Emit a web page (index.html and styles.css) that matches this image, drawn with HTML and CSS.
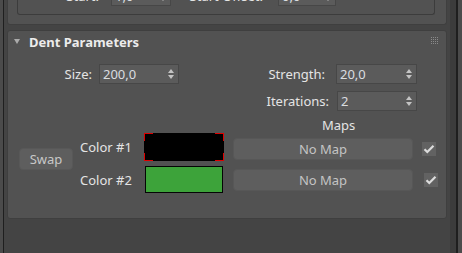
FILE: index.html
```html
<!DOCTYPE html>
<html>
<head>
<meta charset="utf-8">
<link rel="stylesheet" href="styles.css">
</head>
<body>
<div class="shell">
  <div class="edge-l"></div><div class="edge-line"></div><div class="gut-l"></div>
  <div class="main">
    <div class="roll prev">
      <div class="group">
        <div class="prev-row">
          <span class="lbl w-start">Start:</span>
          <div class="field f-start"><span class="val">1,0</span><span class="spin"><i class="up"></i><i class="dn"></i></span></div>
          <span class="lbl w-off">Start Offset:</span>
          <div class="field f-off"><span class="val">0,0</span><span class="spin"><i class="up"></i><i class="dn"></i></span></div>
        </div>
      </div>
    </div>
    <div class="roll dent">
      <div class="head">
        <span class="tri"></span>
        <span class="title">Dent Parameters</span>
        <svg class="grip" width="8" height="8" viewBox="0 0 8 8">
          <g fill="#8a8a8a">
            <rect x="0" y="0" width="1" height="1"/><rect x="2" y="0" width="1" height="1"/><rect x="4" y="0" width="1" height="1"/><rect x="6" y="0" width="1" height="1"/>
            <rect x="0" y="2" width="1" height="1"/><rect x="2" y="2" width="1" height="1"/><rect x="4" y="2" width="1" height="1"/><rect x="6" y="2" width="1" height="1"/>
            <rect x="0" y="4" width="1" height="1"/><rect x="2" y="4" width="1" height="1"/><rect x="4" y="4" width="1" height="1"/><rect x="6" y="4" width="1" height="1"/>
            <rect x="0" y="6" width="1" height="1"/><rect x="2" y="6" width="1" height="1"/><rect x="4" y="6" width="1" height="1"/><rect x="6" y="6" width="1" height="1"/>
          </g>
        </svg>
      </div>
      <div class="row r1">
        <span class="lbl w-size">Size:</span>
        <div class="field f-size"><span class="val">200,0</span><span class="spin"><i class="up"></i><i class="dn"></i></span></div>
        <span class="lbl w-str">Strength:</span>
        <div class="field f-str"><span class="val">20,0</span><span class="spin"><i class="up"></i><i class="dn"></i></span></div>
      </div>
      <div class="row r2">
        <span class="lbl w-it">Iterations:</span>
        <div class="field f-it"><span class="val">2</span><span class="spin"><i class="up"></i><i class="dn"></i></span></div>
      </div>
      <div class="maps">Maps</div>
      <div class="colors">
        <div class="swap">Swap</div>
        <span class="clabel c1">Color #1</span>
        <div class="swatch s1"></div>
        <div class="btn b1">No Map</div>
        <div class="chk k1"><svg width="12" height="10" viewBox="0 0 12 10"><path d="M1.5 5.2 L4.3 8 L10.5 1.8" fill="none" stroke="#dcdcdc" stroke-width="2.2"/></svg></div>
        <span class="clabel c2">Color #2</span>
        <div class="swatch s2"></div>
        <div class="btn b2">No Map</div>
        <div class="chk k2"><svg width="12" height="10" viewBox="0 0 12 10"><path d="M1.5 5.2 L4.3 8 L10.5 1.8" fill="none" stroke="#dcdcdc" stroke-width="2.2"/></svg></div>
      </div>
    </div>
  </div>
  <div class="gut-r"></div><div class="edge-rd"></div><div class="edge-rline"></div><div class="edge-r"></div>
</div>
</body>
</html>
```

FILE: styles.css
```css
* { box-sizing: border-box; }
html, body { margin: 0; padding: 0; }
body {
  width: 462px;
  height: 253px;
  overflow: hidden;
  background: #444444;
  font-family: "Noto Sans", "DejaVu Sans", sans-serif;
  font-size: 13px;
  color: #e4e4e4;
}
.shell { display: flex; height: 253px; }
.edge-l { width: 3px; background: #4b4b4b; }
.edge-line { width: 1px; background: #1f1f1f; }
.gut-l { width: 3px; background: #444444; }
.main { width: 440px; display: flex; flex-direction: column; }
.gut-r { width: 3px; background: #444444; }
.edge-rd { width: 6px; background: #3c3c3c; }
.edge-rline { width: 2px; background: #1f1f1f; }
.edge-r { width: 4px; background: #4b4b4b; }

.roll {
  background: #525252;
  border: 1px solid #3f3f3f;
  border-radius: 3px;
}
.prev {
  height: 25px;
  flex: none;
  border-top: none;
  border-radius: 0 0 3px 3px;
  padding: 0 11px 0 9px;
  overflow: hidden;
}
.group {
  height: 15px;
  border: 1px solid #3c3c3c;
  border-top: none;
  border-radius: 0 0 3px 3px;
  overflow: hidden;
}
.prev-row {
  display: flex;
  align-items: center;
  height: 20px;
  margin-top: -14px;
}
.w-start { width: 81px; text-align: right; }
.f-start { margin-left: 12px; width: 60px; }
.w-off { width: 92px; text-align: right; }
.f-off { margin-left: 15px; width: 58px; }

.dent {
  margin-top: 5px;
  height: 189px;
  flex: none;
  display: flex;
  flex-direction: column;
}
.head {
  display: flex;
  align-items: center;
  height: 21px;
  flex: none;
}
.tri {
  margin-left: 6px;
  width: 0; height: 0;
  border-left: 3.5px solid transparent;
  border-right: 3.5px solid transparent;
  border-top: 5px solid #ababab;
}
.title {
  margin-left: 9px;
  font-weight: bold;
  color: #ececec;
  line-height: 16px;
}
.grip { margin-left: auto; margin-right: 7px; align-self: flex-start; margin-top: 6px; }

.lbl { color: #e4e4e4; line-height: 16px; white-space: nowrap; }
.row { display: flex; align-items: center; height: 20px; flex: none; }
.r1 { margin-top: 12px; }
.r2 { margin-top: 7px; }
.w-size { width: 84px; text-align: right; }
.f-size { margin-left: 7px; width: 80px; }
.w-str { width: 146px; text-align: right; }
.f-str { margin-left: 11px; width: 81px; }
.w-it { width: 321px; text-align: right; }
.f-it { margin-left: 8px; width: 80px; }

.field {
  height: 20px;
  background: #5b5b5b;
  border: 1px solid #474747;
  display: flex;
  align-items: center;
  padding-left: 3px;
}
.val { color: #dadde0; line-height: 16px; flex: 1; }
.spin {
  width: 7px;
  margin-right: 4px;
  display: flex;
  flex-direction: column;
  align-items: center;
  gap: 2px;
}
.spin i { display: block; width: 0; height: 0; border-left: 3px solid transparent; border-right: 3px solid transparent; }
.spin .up { border-bottom: 4px solid #c4c4c4; }
.spin .dn { border-top: 4px solid #c4c4c4; }

.maps {
  margin-top: 7px;
  height: 15px;
  line-height: 15px;
  padding-left: 314px;
  color: #e4e4e4;
  flex: none;
}

.colors {
  display: grid;
  grid-template-columns: 54px 71px 80px 9px 180px 9px 14px;
  grid-template-rows: 28px 27px;
  row-gap: 5px;
  padding-left: 11px;
  flex: none;
}
.swap {
  grid-column: 1; grid-row: 1 / 3;
  align-self: start;
  margin-top: 15px;
  height: 22px;
  background: #5e5e5e;
  border: 1px solid #585858;
  border-radius: 4px;
  color: #c8c8c8;
  display: flex; align-items: center; justify-content: center;
  line-height: 16px;
}
.clabel { grid-column: 2; padding-left: 7px; align-self: center; line-height: 16px; }
.c1 { grid-row: 1; }
.c2 { grid-row: 2; }
.swatch { grid-column: 3; }
.s1 {
  grid-row: 1;
  background-color: #000000;
  background-image:
    linear-gradient(#e00000, #e00000), linear-gradient(#e00000, #e00000),
    linear-gradient(#e00000, #e00000), linear-gradient(#e00000, #e00000),
    linear-gradient(#e00000, #e00000), linear-gradient(#e00000, #e00000),
    linear-gradient(#e00000, #e00000), linear-gradient(#e00000, #e00000);
  background-size: 9px 1px, 1px 8px, 9px 1px, 1px 8px, 9px 1px, 1px 8px, 9px 1px, 1px 8px;
  background-position: left top, left top, right top, right top, left bottom, left bottom, right bottom, right bottom;
  background-repeat: no-repeat;
}
.s2 {
  grid-row: 2;
  margin: 0 1px;
  background: #3da33a;
  border: 1px solid #050505;
}
.btn {
  grid-column: 5;
  align-self: end;
  height: 22px;
  background: #5e5e5e;
  border: 1px solid #575757;
  border-radius: 4px;
  color: #c4c4c4;
  display: flex; align-items: center; justify-content: center;
  line-height: 16px;
}
.b1 { grid-row: 1; margin-bottom: 1px; }
.b2 { grid-row: 2; margin-bottom: 2px; }
.chk {
  grid-column: 7;
  width: 14px; height: 14px;
  background: #626262;
  display: flex; align-items: center; justify-content: center;
  align-self: center;
}
.k1 { grid-row: 1; margin-top: 4px; }
.k2 { grid-row: 2; margin-left: 2px; }
```
